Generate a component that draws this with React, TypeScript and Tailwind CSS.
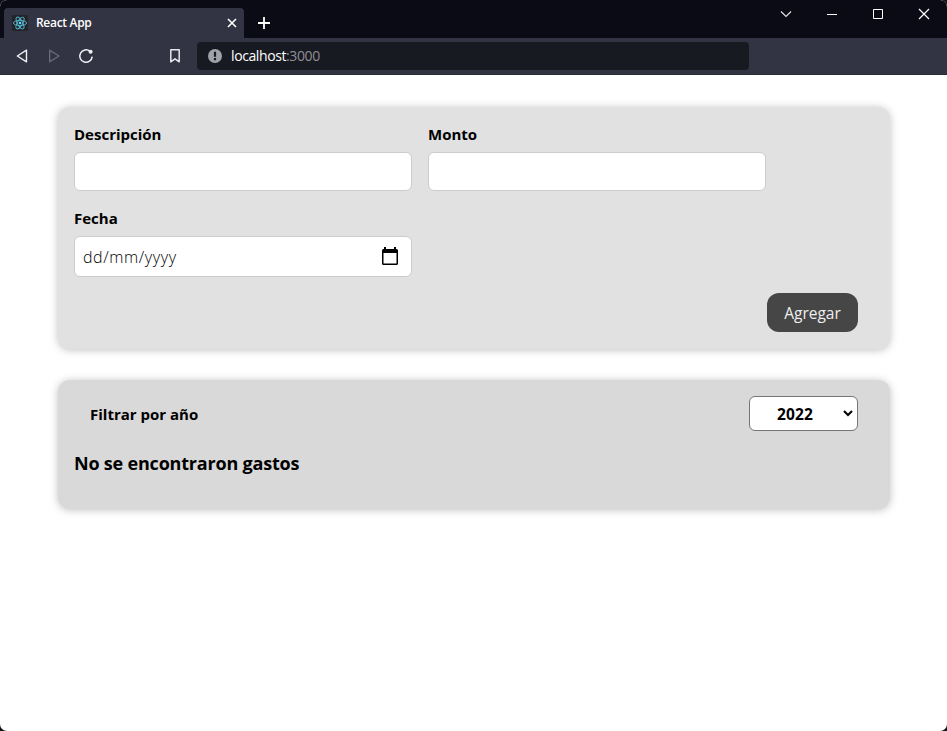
import React from 'react';

function TabBar() {
  return (
    <div className="flex h-[38px] items-start bg-[#0a0b14] pl-1 text-white">
      <div className="mt-2 flex h-[30px] w-[240px] items-center rounded-t-[4px] bg-[#323443] pl-2 pr-[7px]">
        <svg width="16" height="16" viewBox="0 0 16 16" fill="none" stroke="#53b8d0" strokeWidth="0.9">
          <rect width="16" height="16" rx="1.5" fill="#222429" stroke="none" />
          <ellipse cx="8" cy="8" rx="6.6" ry="2.6" />
          <ellipse cx="8" cy="8" rx="6.6" ry="2.6" transform="rotate(60 8 8)" />
          <ellipse cx="8" cy="8" rx="6.6" ry="2.6" transform="rotate(120 8 8)" />
          <circle cx="8" cy="8" r="1.3" fill="#61dafb" stroke="none" />
        </svg>
        <span className="ml-2 text-[12px] font-semibold leading-4 tracking-[-0.3px]">React App</span>
        <svg className="ml-auto" width="10" height="10" viewBox="0 0 10 10" stroke="#fff" strokeWidth="1.6">
          <path d="M1 1l8 8M9 1l-8 8" />
        </svg>
      </div>
      <svg className="ml-[14px] mt-[17px]" width="12" height="12" viewBox="0 0 12 12" stroke="#fff" strokeWidth="1.8">
        <path d="M6 0v12M0 6h12" />
      </svg>
      <div className="ml-auto mt-2 flex items-center gap-[34px] pr-[17px]">
        <svg width="12" height="12" viewBox="0 0 12 12" fill="none" stroke="#e8e8ec" strokeWidth="1.1">
          <path d="M1 3.500l5 5 5-5" />
        </svg>
        <svg width="12" height="12" viewBox="0 0 12 12" fill="none" stroke="#fff">
          <path d="M1 6.500h10" />
        </svg>
        <svg width="12" height="12" viewBox="0 0 12 12" fill="none" stroke="#fff">
          <path d="M1.500 1.500h9v9h-9z" />
        </svg>
        <svg width="12" height="12" viewBox="0 0 12 12" fill="none" stroke="#fff" strokeWidth="1.2">
          <path d="M1 1l10 10M11 1L1 11" />
        </svg>
      </div>
    </div>
  );
}

function AddressBar() {
  return (
    <div className="flex h-[37px] items-center border-b border-[#2b2c39] bg-[#323443] pl-4">
      <svg width="12" height="14" viewBox="0 0 12 14" fill="none" stroke="#f0f0f3" strokeWidth="1.4" strokeLinejoin="round">
        <path d="M10.500 1.200v11.600L1.300 7z" />
      </svg>
      <svg className="ml-[21px]" width="12" height="14" viewBox="0 0 12 14" fill="none" stroke="#6c6e7b" strokeWidth="1.3" strokeLinejoin="round">
        <path d="M.7 1.200v11.600L10 7z" />
      </svg>
      <svg className="ml-[17px]" width="16" height="16" viewBox="0 0 16 16" fill="none" stroke="#f0f0f3" strokeWidth="1.5">
        <path d="M12 3.300A6.200 6.200 0 1 0 14.200 8.600" />
        <circle cx="12.600" cy="3.800" r="2" fill="#f0f0f3" stroke="none" />
      </svg>
      <svg className="ml-[76px]" width="10" height="14" viewBox="0 0 10 14" fill="none" stroke="#e8e8ec" strokeWidth="1.5" strokeLinejoin="round">
        <path d="M.8.8h8.400v12L5 9.800l-4.200 3z" />
      </svg>
      <div className="ml-[17px] flex h-7 w-[552px] items-center rounded-[4px] bg-[#181a21] pl-[11px]">
        <svg width="14" height="14" viewBox="0 0 14 14">
          <circle cx="7" cy="7" r="7" fill="#a0a2ab" />
          <path d="M5.900 2.800h2.200v5H5.900zM5.900 9h2.200v2.200H5.900z" fill="#181a21" />
        </svg>
        <span className="ml-[9px] text-[14px] leading-5 tracking-[-0.4px] text-white">
          localhost<span className="text-[#8d8f97]">:3000</span>
        </span>
      </div>
    </div>
  );
}

function Field({ label, children }: { label: string; children: React.ReactNode }) {
  return (
    <div className="w-[338px]">
      <label className="mb-[7px] block h-[22px] pt-px text-[15px] font-bold leading-[21px]">{label}</label>
      {children}
    </div>
  );
}

function ExpenseForm() {
  return (
    <section className="h-[242px] w-[832px] rounded-xl bg-[#e1e1e1] px-4 pt-4 shadow-[0_1px_8px_rgba(0,0,0,0.25)]">
      <div className="flex flex-wrap gap-x-4 gap-y-4">
        <Field label="Descripción">
          <input className="block h-[39px] w-full rounded-md border border-[#ccc] bg-white px-2 outline-none" />
        </Field>
        <Field label="Monto">
          <input className="block h-[39px] w-full rounded-md border border-[#ccc] bg-white px-2 outline-none" />
        </Field>
        <Field label="Fecha">
          <div className="flex h-[41px] items-center justify-between rounded-md border border-[#ccc] bg-white pl-2 pr-3">
            <span className="pt-px text-[16px] font-light leading-5 tracking-[0.6px]">dd/mm/yyyy</span>
            <svg width="18" height="19" viewBox="0 0 18 19">
              <path d="M3 0h2v2h8V0h2v2h.5a1.500 1.500 0 0 1 1.500 1.500v13a1.500 1.500 0 0 1-1.500 1.500h-13A1.500 1.500 0 0 1 1 16.500v-13A1.500 1.500 0 0 1 2.500 2H3zM2.500 6v10.500h13V6z" fillRule="evenodd" />
            </svg>
          </div>
        </Field>
      </div>
      <div className="mt-4 flex justify-end pr-4">
        <button className="h-[39px] w-[91px] rounded-xl bg-[#464646] pt-px text-[15.500px] leading-5 text-[#eee]">Agregar</button>
      </div>
    </section>
  );
}

function ExpenseList() {
  return (
    <section className="mt-[31px] h-[129px] w-[832px] rounded-xl bg-[#d9d9d9] px-4 pt-4 shadow-[0_1px_8px_rgba(0,0,0,0.25)]">
      <div className="flex items-center justify-between px-4">
        <label className="pt-px text-[15px] font-bold leading-5">Filtrar por año</label>
        <div className="flex h-[35px] w-[109px] items-center rounded-md border border-[#767676] bg-white pl-[27px] pr-1">
          <span className="pt-px text-[15.500px] font-bold leading-5 tracking-[0.15px]">2022</span>
          <svg className="ml-auto" width="10" height="7" viewBox="0 0 10 7" fill="none" stroke="#000" strokeWidth="2">
            <path d="M1 1l4 4 4-4" />
          </svg>
        </div>
      </div>
      <h2 className="mt-5 text-[18px] font-bold leading-[25px] tracking-[-0.2px]">No se encontraron gastos</h2>
    </section>
  );
}

export default function App() {
  return (
    <div className="h-[731px] w-[947px] overflow-hidden bg-[#11131a] font-['Open_Sans','Noto_Sans',sans-serif] text-black">
      <div className="h-full overflow-hidden rounded-[7px] bg-white">
        <TabBar />
        <AddressBar />
        <main className="pl-[58px] pt-8">
          <ExpenseForm />
          <ExpenseList />
        </main>
      </div>
    </div>
  );
}
